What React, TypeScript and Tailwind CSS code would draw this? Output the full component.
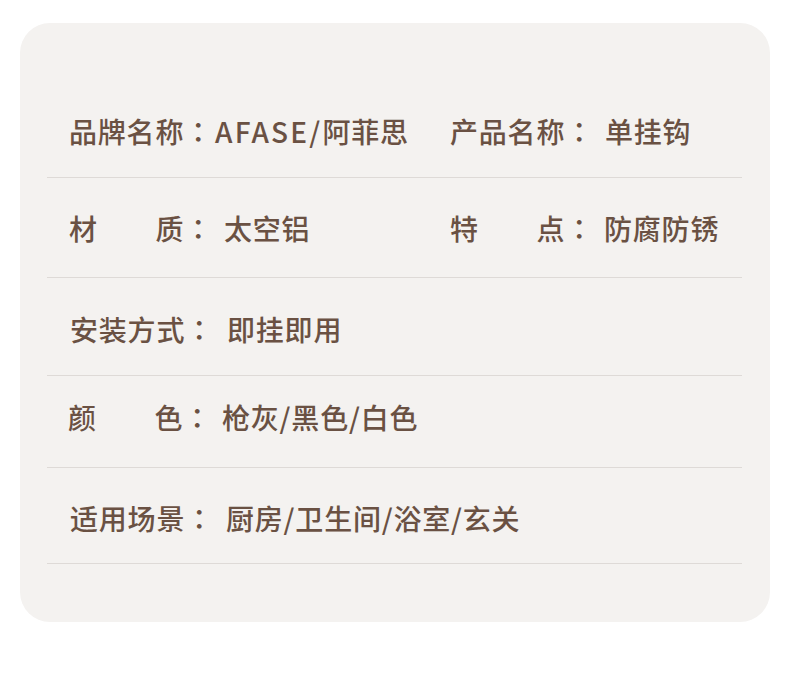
import React from "react";

const font = { fontFamily: '"Noto Sans CJK SC", "Noto Sans", sans-serif' };
const tc = { fontFamily: '"Noto Sans CJK TC", "Noto Sans CJK SC", sans-serif' };

function Cell({ label, value, gap, latin }: { label: string; value: string; gap: string; latin?: string }) {
  return (
    <div className="flex items-center whitespace-pre">
      <span>{label}</span>
      <span style={tc}>：</span>
      <span className={gap}>
        {latin ? <span className="tracking-[2.2px]">{latin}</span> : null}
        {value}
      </span>
    </div>
  );
}

export default function App() {
  return (
    <div className="w-[790px] h-[698px] bg-white pt-[23px] pl-[20px]" style={font}>
      <div className="w-[750px] h-[599px] bg-[#f4f2f0] rounded-[30px] pt-[94px] pl-[27px] pr-[28px] text-[28px] leading-[28px] tracking-[0.8px] font-medium text-[#6a5143]">
        <div className="border-b border-[#dedad7] pb-[32px] pl-[22px] flex">
          <div className="w-[381px]">
            <Cell label="品牌名称" latin="AFASE/" value="阿菲思" gap="ml-[2px]" />
          </div>
          <Cell label="产品名称" value="单挂钩" gap="ml-[11px]" />
        </div>
        <div className="border-b border-[#dedad7] pt-[36px] pb-[35px] pl-[22px] flex">
          <div className="w-[381px]">
            <Cell label={"材\u3000\u3000质"} value="太空铝" gap="ml-[11px]" />
          </div>
          <Cell label={"特\u3000\u3000点"} value="防腐防锈" gap="ml-[10px]" />
        </div>
        <div className="border-b border-[#dedad7] pt-[37px] pb-[32px] pl-[23px] flex">
          <Cell label="安装方式" value="即挂即用" gap="ml-[13px]" />
        </div>
        <div className="border-b border-[#dedad7] pt-[27px] pb-[36px] pl-[21px] flex">
          <Cell label={"颜\u3000\u3000色"} value="枪灰/黑色/白色" gap="ml-[10px]" />
        </div>
        <div className="border-b border-[#dedad7] pt-[36px] pb-[31px] pl-[23px] flex">
          <Cell label="适用场景" value="厨房/卫生间/浴室/玄关" gap="ml-[12px]" />
        </div>
      </div>
    </div>
  );
}
